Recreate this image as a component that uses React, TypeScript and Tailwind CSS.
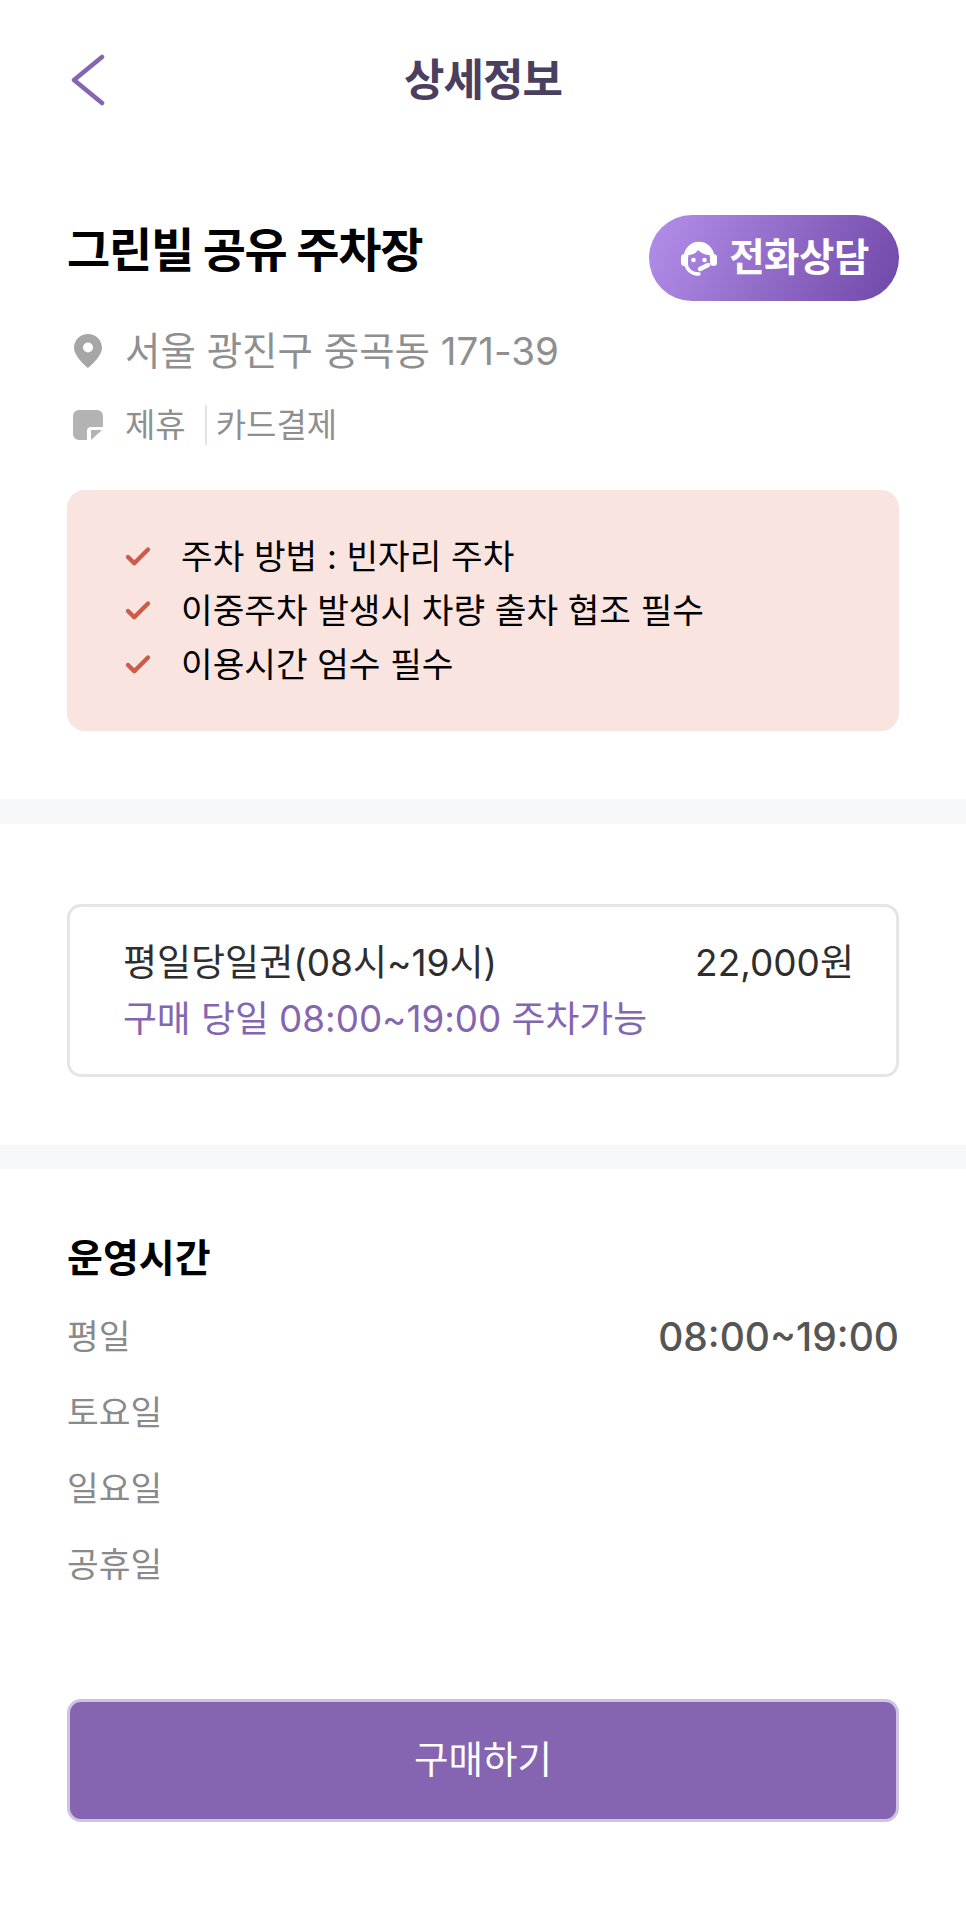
import { Check } from 'lucide-react';

const notes = ['주차 방법 : 빈자리 주차', '이중주차 발생시 차량 출차 협조 필수', '이용시간 엄수 필수'];
const hours = [
  { day: '평일', time: '08:00~19:00' },
  { day: '토요일', time: '' },
  { day: '일요일', time: '' },
  { day: '공휴일', time: '' },
];

function AgentIcon() {
  return (
    <svg viewBox="0 0 40 36" className="w-[40px] h-[36px] shrink-0" fill="none">
      <path d="M7 17a13 13 0 0 1 26 0" stroke="#fff" strokeWidth="4.500" />
      <path d="M8 15c6 0 9-2 11-5 3 3 7 5 13 5v-3L26 5H14L8 11z" fill="#fff" />
      <rect x="2" y="14" width="7" height="12" rx="3.500" fill="#fff" />
      <rect x="31" y="14" width="7" height="12" rx="3.500" fill="#fff" />
      <path d="M7 24c1 6 6 10 13 10" stroke="#fff" strokeWidth="3.500" strokeLinecap="round" />
      <circle cx="14.500" cy="20" r="2.300" fill="#fff" />
      <circle cx="25.500" cy="20" r="2.300" fill="#fff" />
      <path d="M21 29l8-4" stroke="#fff" strokeWidth="4.500" strokeLinecap="round" />
    </svg>
  );
}

export default function App() {
  return (
    <div className="w-[966px] h-[1907px] bg-white overflow-hidden font-['Inter','Noto_Sans_CJK_KR',sans-serif]">
      {/* Header */}
      <header className="h-[160px] px-[67px] grid grid-cols-[1fr_auto_1fr] items-center">
        <svg viewBox="0 0 38 52" className="w-[38px] h-[52px]" fill="none">
          <path d="M35 3L7 26l28 23" stroke="#8465B1" strokeWidth="4.5" strokeLinecap="round" strokeLinejoin="round" />
        </svg>
        <h1 className="text-[44px] leading-none font-bold text-[#4A3F5F] tracking-[-1px]">상세정보</h1>
        <div />
      </header>

      {/* Info */}
      <section className="px-[67px] pt-[55px] pb-[68px]">
        <div className="flex justify-between items-start">
          <h2 className="text-[47px] leading-[70px] font-bold text-black tracking-[-1.3px]">그린빌 공유 주차장</h2>
          <button className="w-[250px] h-[86px] rounded-full bg-linear-[115deg] from-[#B48FEA] to-[#7048A8] flex items-center justify-center gap-[10px] text-white text-[38.500px] font-bold tracking-[-0.5px]">
            <AgentIcon />
            전화상담
          </button>
        </div>

        <div className="mt-[25px] h-[50px] flex items-center">
          <svg viewBox="0 0 28 34" className="ml-[7px] w-[28px] h-[34px] text-[#A6A6A6]">
            <path
              fillRule="evenodd"
              fill="currentColor"
              d="M14 0C6.3 0 0 6.1 0 13.8 0 23 14 34 14 34s14-11 14-20.200C28 6.100 21.700 0 14 0zm0 18.500a5 5 0 1 1 0-10 5 5 0 0 1 0 10z"
            />
          </svg>
          <span className="ml-[23px] text-[38.500px] leading-none text-[#8F8F8F]">서울 광진구 중곡동 171-39</span>
        </div>

        <div className="mt-[24px] h-[50px] flex items-center text-[33px] leading-none text-[#8F8F8F]">
          <svg viewBox="0 0 30 30" className="ml-[6px] w-[30px] h-[30px]">
            <path d="M6 0h18a6 6 0 0 1 6 6v11H18a4 4 0 0 0-4 4v9H6a6 6 0 0 1-6-6V6a6 6 0 0 1 6-6z" fill="#B3B3B3" />
            <path d="M18 20h11L18 30z" fill="#B3B3B3" />
          </svg>
          <span className="ml-[22px]">제휴</span>
          <span className="ml-[19px] w-[2px] h-[40px] bg-[#E2E2E2]" />
          <span className="ml-[9px]">카드결제</span>
        </div>

        <ul className="mt-[40px] h-[241px] rounded-[18px] bg-[#F9E4E0] pl-[56px] flex flex-col justify-center">
          {notes.map((note) => (
            <li key={note} className="h-[54px] flex items-center text-[34.400px] text-black">
              <Check className="w-[30px] h-[30px] text-[#CB5B4A] shrink-0" strokeWidth={3.5} />
              <span className="ml-[28px]">{note}</span>
            </li>
          ))}
        </ul>
      </section>

      <div className="h-[25px] bg-[#F7F8FA]" />

      {/* Ticket */}
      <section className="px-[67px] pt-[80px] pb-[68px]">
        <div className="h-[173px] rounded-[14px] border-[3px] border-[#E5E5E8] pl-[53px] pr-[42px] flex flex-col justify-center">
          <div className="flex justify-between text-[37px] leading-[56px] text-[#2E2E2E]">
            <span>평일당일권(08시~19시)</span>
            <span>22,000원</span>
          </div>
          <p className="text-[36.800px] leading-[56px] text-[#8465B1]">구매 당일 08:00~19:00 주차가능</p>
        </div>
      </section>

      <div className="h-[24px] bg-[#F7F8FA]" />

      {/* Hours */}
      <section className="px-[67px] pt-[60px]">
        <h3 className="text-[39px] leading-[58px] font-bold text-black">운영시간</h3>
        <div className="mt-[12px]">
          {hours.map((row) => (
            <div key={row.day} className="h-[76px] flex justify-between items-center">
              <span className="text-[34.500px] text-[#8A8A8A]">{row.day}</span>
              <span className="text-[39px] font-medium text-[#555555]">{row.time}</span>
            </div>
          ))}
        </div>
        <button className="mt-[96px] w-full h-[123px] rounded-[14px] border-[3px] border-[#CFC3DF] bg-[#8564B2] text-white text-[37.500px]">
          구매하기
        </button>
      </section>
    </div>
  );
}
